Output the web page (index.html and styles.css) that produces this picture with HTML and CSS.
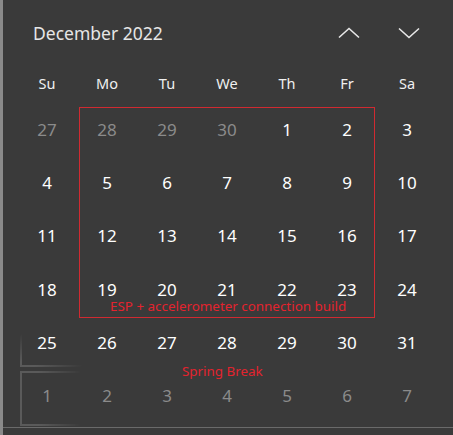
FILE: index.html
```html
<!DOCTYPE html>
<html>
<head>
<meta charset="utf-8">
<link rel="stylesheet" href="styles.css">
</head>
<body>
<div class="cal">
  <div class="head">
    <div class="month">December 2022</div>
    <div class="navs">
      <svg class="nav" width="22" height="12" viewBox="0 0 22 12"><path d="M1 10.5 L11 1.5 L21 10.5" fill="none" stroke="#e8e8e8" stroke-width="1.6"/></svg>
      <svg class="nav" width="22" height="12" viewBox="0 0 22 12"><path d="M1 1.5 L11 10.5 L21 1.5" fill="none" stroke="#e8e8e8" stroke-width="1.6"/></svg>
    </div>
  </div>
  <div class="grid">
    <div class="wd">Su</div><div class="wd">Mo</div><div class="wd">Tu</div><div class="wd">We</div><div class="wd">Th</div><div class="wd">Fr</div><div class="wd">Sa</div>
    <div class="d dim">27</div><div class="d dim">28</div><div class="d dim">29</div><div class="d dim">30</div><div class="d">1</div><div class="d">2</div><div class="d">3</div>
    <div class="d">4</div><div class="d">5</div><div class="d">6</div><div class="d">7</div><div class="d">8</div><div class="d">9</div><div class="d">10</div>
    <div class="d">11</div><div class="d">12</div><div class="d">13</div><div class="d">14</div><div class="d">15</div><div class="d">16</div><div class="d">17</div>
    <div class="d">18</div><div class="d">19</div><div class="d">20</div><div class="d">21</div><div class="d">22</div><div class="d">23</div><div class="d">24</div>
    <div class="d">25</div><div class="d">26</div><div class="d">27</div><div class="d">28</div><div class="d">29</div><div class="d">30</div><div class="d">31</div>
    <div class="d dim">1</div><div class="d dim">2</div><div class="d dim">3</div><div class="d dim">4</div><div class="d dim">5</div><div class="d dim">6</div><div class="d dim">7</div>
  </div>
  <div class="event-box"></div>
  <div class="event-label esp">ESP + accelerometer connection build</div>
  <div class="event-label spring">Spring Break</div>
  <div class="reveal r1"></div>
  <div class="reveal r2"></div>
  <div class="bottom-line"></div>
</div>
</body>
</html>
```
FILE: styles.css
```css
html, body {
  margin: 0;
  padding: 0;
  background: #3a3a3a;
}
.cal {
  position: relative;
  width: 450px;
  height: 435px;
  border-left: 3px solid #8a8a8a;
  background: #3a3a3a;
  font-family: "Noto Sans", "Open Sans", sans-serif;
  color: #ffffff;
  overflow: hidden;
}
.head {
  height: 62px;
  display: flex;
  align-items: flex-start;
  justify-content: space-between;
  padding: 0 33px 0 30px;
  box-sizing: border-box;
}
.month {
  font-size: 17.5px;
  color: #e6e6e6;
  margin-top: 21px;
}
.navs {
  display: flex;
  gap: 38px;
  margin-top: 27px;
}
.nav { display: block; }
.grid {
  margin-left: 14px;
  width: 420px;
  display: grid;
  grid-template-columns: repeat(7, 60px);
  grid-template-rows: 41px repeat(6, 53.33px);
}
.wd {
  display: flex;
  align-items: center;
  justify-content: center;
  font-size: 14.5px;
  color: #f0f0f0;
}
.d {
  display: flex;
  align-items: center;
  justify-content: center;
  font-size: 17px;
  line-height: 16px;
  color: #ffffff;
}
.d.dim { color: #8b8b8b; }
.event-box {
  position: absolute;
  left: 76px;
  top: 107px;
  width: 294px;
  height: 209px;
  border: 1px solid #d02a31;
}
.event-label {
  position: absolute;
  color: #e3232e;
  font-size: 13.4px;
  line-height: 13px;
  white-space: nowrap;
}
.esp { left: 107px; top: 299.5px; }
.spring { left: 179px; top: 365px; }
.reveal {
  position: absolute;
  left: 17px;
  width: 60px;
  border-left: 2px solid #5a5a5a;
  border-bottom: 2px solid #5a5a5a;
}
.r1 {
  top: 334px;
  height: 31px;
  mask-image: linear-gradient(135deg, transparent 0%, #000 30%, #000 50%, transparent 100%);
  -webkit-mask-image: linear-gradient(135deg, transparent 0%, #000 30%, #000 50%, transparent 100%);
}
.r2 {
  top: 371px;
  height: 51px;
  border-top: 2px solid #5a5a5a;
  mask-image: linear-gradient(to right, #000 0%, #000 30%, transparent 100%);
  -webkit-mask-image: linear-gradient(to right, #000 0%, #000 30%, transparent 100%);
}
.bottom-line {
  position: absolute;
  left: 0;
  right: 0;
  top: 427px;
  height: 1px;
  background: #6a6a6a;
}
```
